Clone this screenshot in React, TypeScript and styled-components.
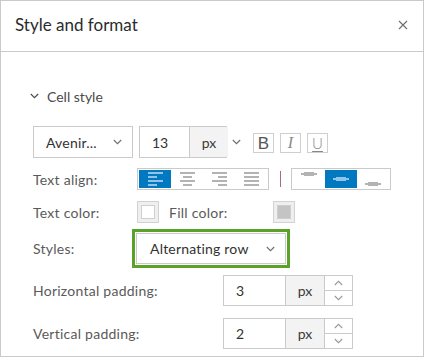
import React from 'react'
import styled, { createGlobalStyle } from 'styled-components'

const GlobalStyle = createGlobalStyle`
  html, body {
    margin: 0;
    padding: 0;
    background: #fff;
  }
  body {
    font-family: Lato, "Noto Sans", sans-serif;
  }
`

const Panel = styled.div`
  width: 424px;
  height: 357px;
  box-sizing: border-box;
  border: 1px solid #cacaca;
  background: #fff;
  overflow: hidden;
`

const Header = styled.div`
  height: 50px;
  border-bottom: 1px solid #cacaca;
  display: flex;
  align-items: center;
  justify-content: space-between;
  padding: 0 14px 0 14px;
`

const Title = styled.div`
  font-size: 17px;
  color: #2b2b2b;
  margin-top: -4px;
`

const CloseBtn = styled.div`
  width: 12px;
  height: 12px;
  display: flex;
  align-items: center;
  justify-content: center;
  margin-top: -2px;
`

const Body = styled.div`
  padding: 34px 0 0 32px;
`

const SectionHead = styled.div`
  display: flex;
  align-items: center;
  height: 20px;
  margin-left: -3px;
  font-size: 14px;
  color: #4a4a4a;
  gap: 8px;
`

const Row = styled.div<{ $top: number; $height: number }>`
  display: flex;
  align-items: center;
  margin-top: ${(p) => p.$top}px;
  height: ${(p) => p.$height}px;
`

const Label = styled.div<{ $width: number; $ml?: number }>`
  width: ${(p) => p.$width}px;
  margin-left: ${(p) => p.$ml ?? 0}px;
  flex: none;
  font-size: 14px;
  letter-spacing: 0.25px;
  color: #5a5a5a;
`

const Select = styled.div<{ $width: number; $height: number; $pad: number }>`
  box-sizing: border-box;
  width: ${(p) => p.$width}px;
  height: ${(p) => p.$height}px;
  border: 1px solid #cacaca;
  background: #fff;
  display: flex;
  align-items: center;
  justify-content: space-between;
  padding: 0 10px 0 ${(p) => p.$pad}px;
  font-size: 14px;
  letter-spacing: 0.2px;
  color: #323232;
`

const NumberBox = styled.div<{ $width: number; $height: number; $ml: number }>`
  box-sizing: border-box;
  display: flex;
  width: ${(p) => p.$width}px;
  height: ${(p) => p.$height}px;
  margin-left: ${(p) => p.$ml}px;
  border: 1px solid #cacaca;
  font-size: 14px;
  color: #323232;
`

const NumberValue = styled.div<{ $width: number }>`
  width: ${(p) => p.$width}px;
  flex: none;
  display: flex;
  align-items: center;
  padding-left: 12px;
  box-sizing: border-box;
`

const Unit = styled.div<{ $width: number }>`
  width: ${(p) => p.$width}px;
  flex: none;
  display: flex;
  align-items: center;
  justify-content: center;
  background: #f3f3f3;
  border-left: 1px solid #cacaca;
  color: #3a3a3a;
`

const Stepper = styled.div`
  flex: 1;
  display: flex;
  flex-direction: column;
  border-left: 1px solid #cacaca;
`

const StepHalf = styled.div<{ $bottom?: boolean }>`
  flex: 1;
  display: flex;
  align-items: center;
  justify-content: center;
  border-top: ${(p) => (p.$bottom ? '1px solid #cacaca' : 'none')};
`

const IconSlot = styled.div<{ $ml: number }>`
  margin-left: ${(p) => p.$ml}px;
  display: flex;
  align-items: center;
`

const FormatBtn = styled.div<{ $ml: number }>`
  box-sizing: border-box;
  width: 21px;
  height: 20px;
  margin-left: ${(p) => p.$ml}px;
  margin-top: 2px;
  border: 1px solid #cfcfcf;
  display: flex;
  align-items: center;
  justify-content: center;
  color: #6e6e6e;
`

const BoldGlyph = styled.span`
  font-family: "Liberation Sans", Arial, sans-serif;
  font-size: 17px;
  color: #555;
  line-height: 1;
`

const ItalicGlyph = styled.span`
  font-family: "Liberation Serif", serif;
  font-style: italic;
  font-size: 16px;
  color: #888;
  line-height: 1;
`

const UnderGlyph = styled.span`
  font-family: Lato, sans-serif;
  font-weight: 300;
  font-size: 15px;
  color: #888;
  line-height: 1;
  text-decoration: underline;
  text-decoration-thickness: 1px;
  text-underline-offset: 2px;
`

const BtnGroup = styled.div<{ $ml: number }>`
  box-sizing: border-box;
  display: flex;
  height: 22px;
  padding: 1px;
  margin-left: ${(p) => p.$ml}px;
  border: 1px solid #cacaca;
`

const GroupBtn = styled.div<{ $active?: boolean }>`
  width: 32px;
  height: 100%;
  display: flex;
  align-items: center;
  justify-content: center;
  background: ${(p) => (p.$active ? '#0079c1' : '#fff')};
`

const Pipe = styled.div`
  width: 1px;
  height: 16px;
  margin-left: 11px;
  background: #a86a8a;
`

const Swatch = styled.div<{ $fill: string }>`
  box-sizing: border-box;
  width: 22px;
  height: 22px;
  border: 1px solid #d2d2d2;
  background: #efefef;
  display: flex;
  align-items: center;
  justify-content: center;

  &::after {
    content: '';
    width: 14px;
    height: 14px;
    box-sizing: border-box;
    border: 1px solid #cfcfcf;
    background: ${(p) => p.$fill};
  }
`

const Highlight = styled.div`
  box-sizing: border-box;
  border: 3px solid #5ba228;
  padding: 1px;
  margin-left: -1px;
`

const Chevron = ({ up = false, color = '#6e6e6e' }: { up?: boolean; color?: string }) => (
  <svg width="9" height="6" viewBox="0 0 9 6">
    <path
      d={up ? 'M0.8 5 L4.5 1.3 L8.2 5' : 'M0.8 1 L4.5 4.7 L8.2 1'}
      fill="none"
      stroke={color}
      strokeWidth="1.1"
    />
  </svg>
)

const HAlignIcon = ({ kind, active }: { kind: 'left' | 'center' | 'right' | 'justify'; active?: boolean }) => {
  const c = active ? '#8fc3e8' : '#b3b3b3'
  const widths = kind === 'justify' ? [15, 15, 15, 15] : [15, 9, 15, 9]
  return (
    <svg width="15" height="14" viewBox="0 0 15 14">
      {widths.map((w, i) => {
        const x = kind === 'left' || kind === 'justify' ? 0 : kind === 'center' ? (15 - w) / 2 : 15 - w
        return <rect key={i} x={x} y={i * 4} width={w} height="2" fill={c} />
      })}
    </svg>
  )
}

const VAlignIcon = ({ pos, active }: { pos: 'top' | 'middle' | 'bottom'; active?: boolean }) => {
  const c = active ? '#8fc3e8' : '#b3b3b3'
  const y = pos === 'top' ? 0 : pos === 'middle' ? 5 : 10
  return (
    <svg width="16" height="14" viewBox="0 0 16 14">
      <rect x="0" y={y + 1} width="16" height="2" fill={c} />
      <rect x="3" y={y} width="10" height="4" fill={c} />
    </svg>
  )
}

const NumberInput = ({ value }: { value: string }) => (
  <NumberBox $width={130} $height={31} $ml={0}>
    <NumberValue $width={61}>{value}</NumberValue>
    <Unit $width={38}>px</Unit>
    <Stepper>
      <StepHalf>
        <Chevron up color="#9a9a9a" />
      </StepHalf>
      <StepHalf $bottom>
        <Chevron color="#9a9a9a" />
      </StepHalf>
    </Stepper>
  </NumberBox>
)

export default function App() {
  return (
    <>
      <GlobalStyle />
      <Panel>
        <Header>
          <Title>Style and format</Title>
          <CloseBtn>
            <svg width="10" height="10" viewBox="0 0 10 10">
              <path d="M1 1 L9 9 M9 1 L1 9" stroke="#6e6e6e" strokeWidth="1.1" />
            </svg>
          </CloseBtn>
        </Header>
        <Body>
          <SectionHead>
            <Chevron color="#4a4a4a" />
            Cell style
          </SectionHead>

          <Row $top={20} $height={32}>
            <Select $width={100} $height={32} $pad={12}>
              <span>Avenir...</span>
              <Chevron />
            </Select>
            <NumberBox $width={88} $height={32} $ml={6}>
              <NumberValue $width={49}>13</NumberValue>
              <Unit $width={38}>px</Unit>
            </NumberBox>
            <IconSlot $ml={5}>
              <Chevron />
            </IconSlot>
            <FormatBtn $ml={12}>
              <BoldGlyph>B</BoldGlyph>
            </FormatBtn>
            <FormatBtn $ml={6}>
              <ItalicGlyph>I</ItalicGlyph>
            </FormatBtn>
            <FormatBtn $ml={6}>
              <UnderGlyph>U</UnderGlyph>
            </FormatBtn>
          </Row>

          <Row $top={10} $height={22}>
            <Label $width={104}>Text align:</Label>
            <BtnGroup $ml={0}>
              <GroupBtn $active>
                <HAlignIcon kind="left" active />
              </GroupBtn>
              <GroupBtn>
                <HAlignIcon kind="center" />
              </GroupBtn>
              <GroupBtn>
                <HAlignIcon kind="right" />
              </GroupBtn>
              <GroupBtn>
                <HAlignIcon kind="justify" />
              </GroupBtn>
            </BtnGroup>
            <Pipe />
            <BtnGroup $ml={10}>
              <GroupBtn>
                <VAlignIcon pos="top" />
              </GroupBtn>
              <GroupBtn $active>
                <VAlignIcon pos="middle" active />
              </GroupBtn>
              <GroupBtn>
                <VAlignIcon pos="bottom" />
              </GroupBtn>
            </BtnGroup>
          </Row>

          <Row $top={11} $height={22}>
            <Label $width={104}>Text color:</Label>
            <Swatch $fill="#ffffff" />
            <Label $width={104} $ml={10}>
              Fill color:
            </Label>
            <Swatch $fill="#c4c4c4" />
          </Row>

          <Row $top={5} $height={41}>
            <Label $width={100}>Styles:</Label>
            <Highlight>
              <Select $width={150} $height={31} $pad={13}>
                <span>Alternating row</span>
                <Chevron />
              </Select>
            </Highlight>
          </Row>

          <Row $top={6} $height={31}>
            <Label $width={190}>Horizontal padding:</Label>
            <NumberInput value="3" />
          </Row>

          <Row $top={12} $height={31}>
            <Label $width={190}>Vertical padding:</Label>
            <NumberInput value="2" />
          </Row>
        </Body>
      </Panel>
    </>
  )
}
